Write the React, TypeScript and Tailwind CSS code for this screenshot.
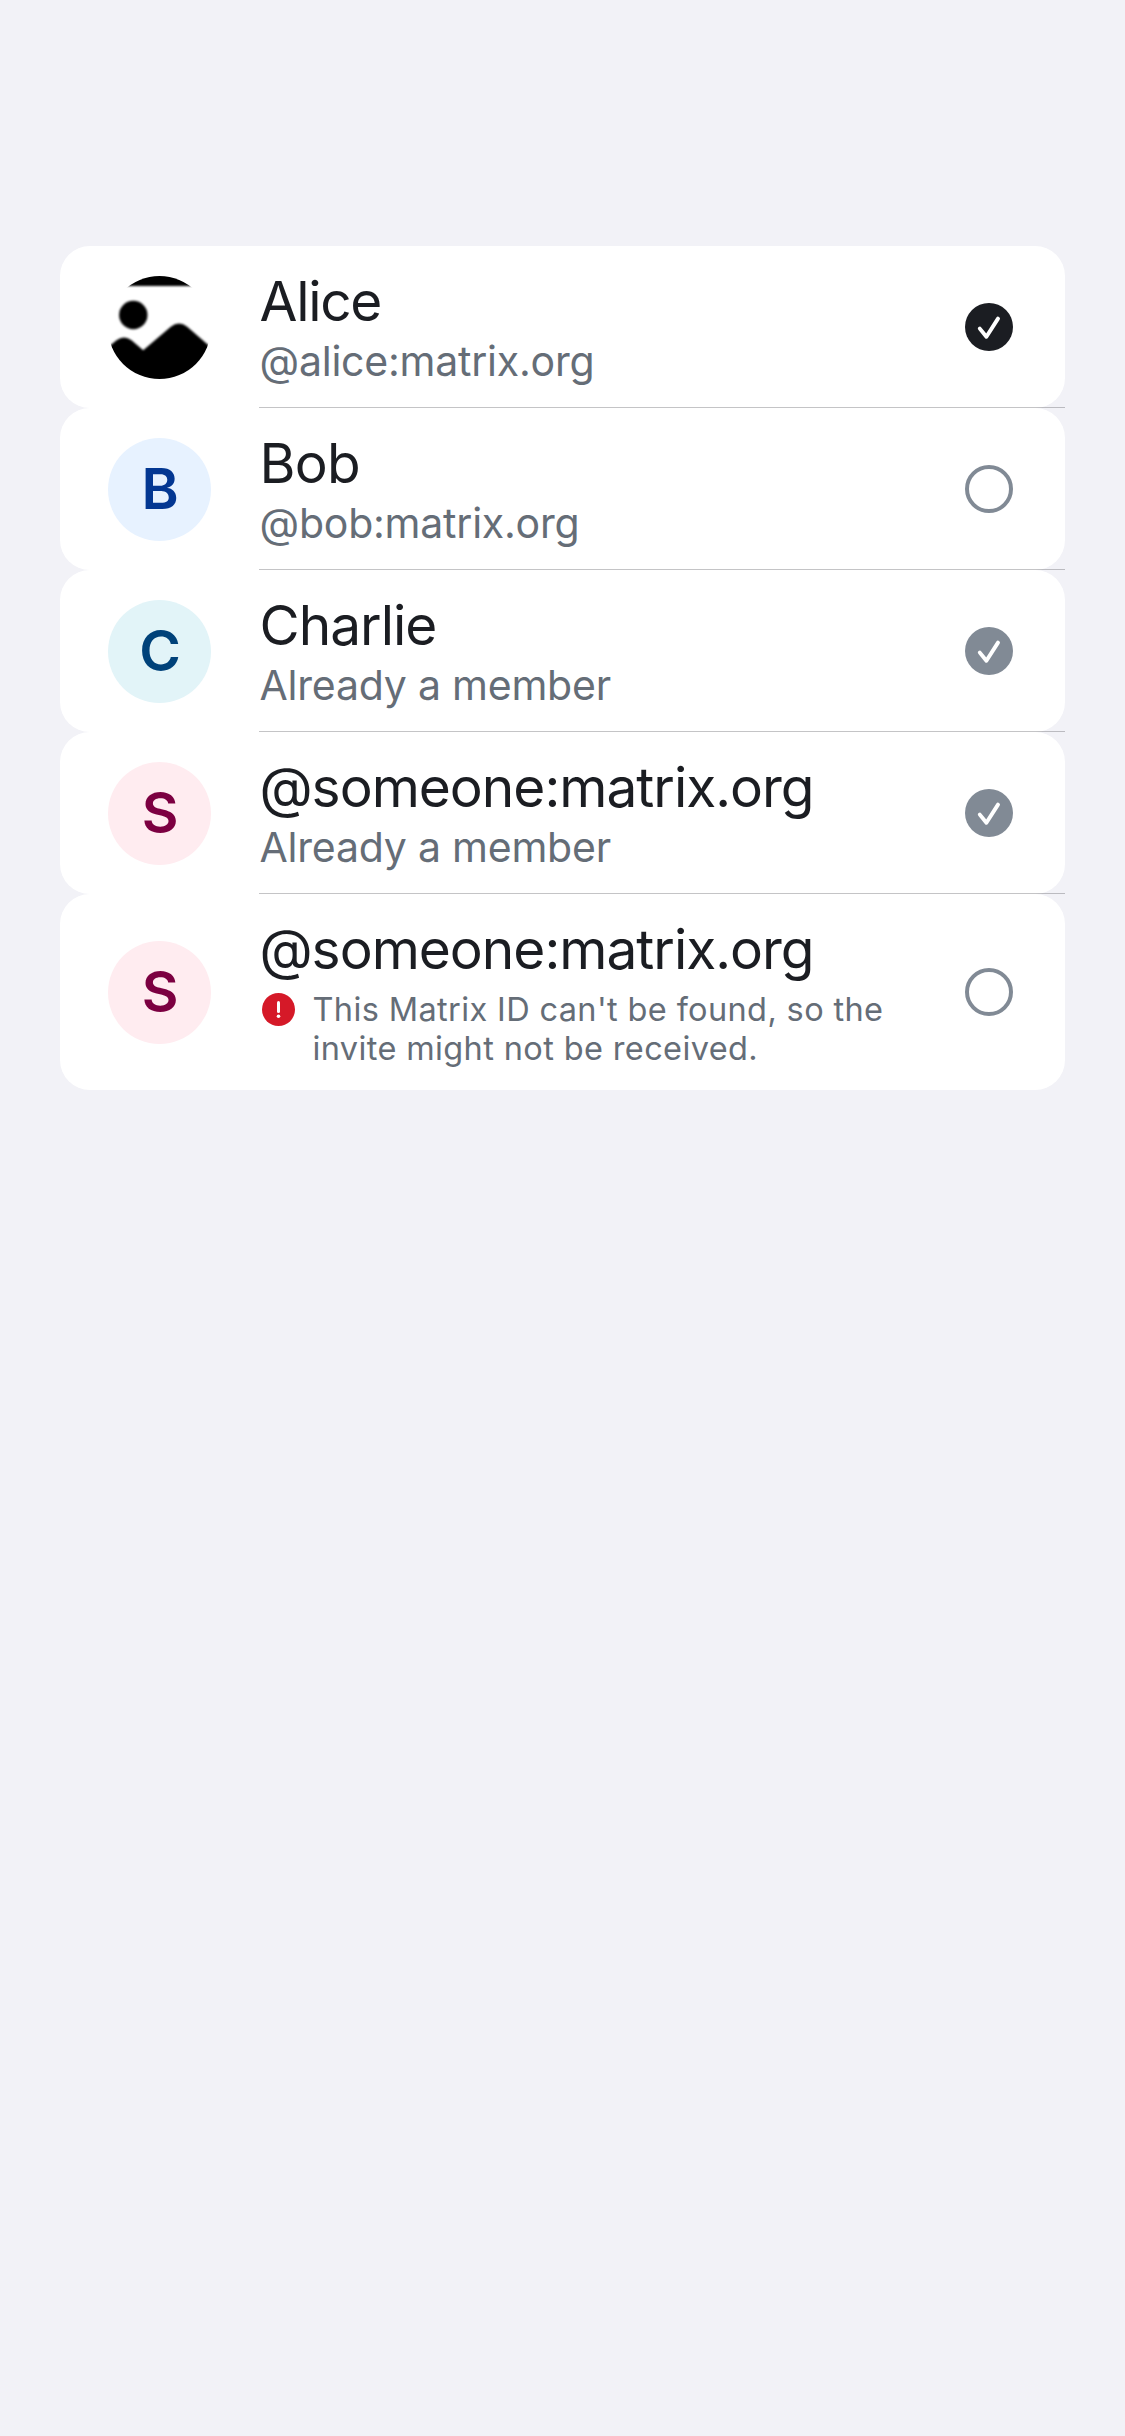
import type { ReactNode } from 'react';

type ToggleState = 'selected' | 'empty' | 'disabled';

function Toggle({ state }: { state: ToggleState }) {
  if (state === 'empty') {
    return <span className="size-12 shrink-0 rounded-full border-4 border-[#818a95]" />;
  }
  return (
    <svg
      viewBox="0 0 48 48"
      className={`size-12 shrink-0 ${state === 'selected' ? 'text-[#1b1d22]' : 'text-[#818a95]'}`}
    >
      <circle cx="24" cy="24" r="24" fill="currentColor" />
      <path
        d="M14.8 25.6 21.4 33.8 33 15.6"
        fill="none"
        stroke="#fff"
        strokeWidth="3.9"
        strokeLinecap="round"
        strokeLinejoin="round"
      />
    </svg>
  );
}

function PhotoAvatar() {
  return (
    <svg viewBox="0 0 103 103" className="size-[103px] shrink-0">
      <defs>
        <clipPath id="avatar-circle">
          <circle cx="51.5" cy="51.5" r="51.5" />
        </clipPath>
        <filter id="avatar-soften" x="-10%" y="-10%" width="120%" height="120%">
          <feGaussianBlur stdDeviation="0.8" />
        </filter>
      </defs>
      <g clipPath="url(#avatar-circle)">
        <rect width="103" height="103" fill="#fff" />
        <g filter="url(#avatar-soften)">
          <rect x="-5" y="-5" width="113" height="15" />
          <circle cx="25.3" cy="39" r="14.2" />
          <path d="M-4 74.5 8.5 64.3Q16 58.6 23.5 64.3L35.2 74.2 62.8 50.8Q71 44.2 79.2 50.8L110 77.5V110H-4Z" />
        </g>
      </g>
    </svg>
  );
}

function LetterAvatar({ letter, tone }: { letter: string; tone: string }) {
  return (
    <span
      className={`size-[103px] shrink-0 rounded-full pl-px text-center text-[56.5px] leading-[102px] font-semibold ${tone}`}
    >
      {letter}
    </span>
  );
}

function ErrorIcon() {
  return (
    <svg viewBox="0 0 33 33" className="mt-[3px] ml-[2px] size-[33px] shrink-0">
      <circle cx="16.5" cy="16.5" r="16.5" fill="#d51928" />
      <path d="M16.5 9.4V18.6" stroke="#fff" strokeWidth="3" strokeLinecap="round" />
      <circle cx="16.5" cy="23.3" r="1.8" fill="#fff" />
    </svg>
  );
}

interface Row {
  avatar: ReactNode;
  name: string;
  spacing: string;
  subtitle?: string;
  error?: string[];
  state: ToggleState;
}

const pink = 'bg-[#ffecf0] text-[#7c0041]';

const rows: Row[] = [
  { avatar: <PhotoAvatar />, name: 'Alice', spacing: 'tracking-[-1.3px]', subtitle: '@alice:matrix.org', state: 'selected' },
  {
    avatar: <LetterAvatar letter="B" tone="bg-[#e7f2ff] text-[#033792]" />,
    name: 'Bob',
    spacing: 'tracking-[-0.7px]',
    subtitle: '@bob:matrix.org',
    state: 'empty',
  },
  {
    avatar: <LetterAvatar letter="C" tone="bg-[#e2f4f8] text-[#00427a]" />,
    name: 'Charlie',
    spacing: 'tracking-[-1px]',
    subtitle: 'Already a member',
    state: 'disabled',
  },
  {
    avatar: <LetterAvatar letter="S" tone={pink} />,
    name: '@someone:matrix.org',
    spacing: 'tracking-[-1px]',
    subtitle: 'Already a member',
    state: 'disabled',
  },
  {
    avatar: <LetterAvatar letter="S" tone={pink} />,
    name: '@someone:matrix.org',
    spacing: 'tracking-[-1px]',
    error: ["This Matrix ID can't be found, so the", 'invite might not be received.'],
    state: 'empty',
  },
];

function MemberRow({ row, last }: { row: Row; last: boolean }) {
  return (
    <li className="relative flex items-center rounded-[30px] bg-white pr-[52px] pl-12">
      <div className="flex pt-px">{row.avatar}</div>
      <div className="ml-[48.5px] flex-1 py-[22px] whitespace-nowrap">
        <div className={`text-[55px] leading-[66px] text-[#1b1d22] ${row.spacing}`}>{row.name}</div>
        {row.subtitle && (
          <div className="mt-0.5 text-[41px] leading-[50px] tracking-[-0.22px] text-[#656d77]">
            {row.subtitle}
          </div>
        )}
        {row.error && (
          <div className="mt-2 flex gap-[18px]">
            <ErrorIcon />
            <div className="text-[32.5px] leading-[39px] tracking-[0.37px] text-[#656d77]">
              {row.error.map((line) => (
                <div key={line}>{line}</div>
              ))}
            </div>
          </div>
        )}
      </div>
      <Toggle state={row.state} />
      {!last && <span className="absolute right-0 bottom-0 left-[199px] h-px bg-[#3c3c43]/30" />}
    </li>
  );
}

export default function App() {
  return (
    <main className="min-h-screen bg-[#f2f2f7] px-[60px] pt-[246px] font-['Inter',sans-serif]">
      <ul className="flex flex-col">
        {rows.map((row, i) => (
          <MemberRow key={i} row={row} last={i === rows.length - 1} />
        ))}
      </ul>
    </main>
  );
}
